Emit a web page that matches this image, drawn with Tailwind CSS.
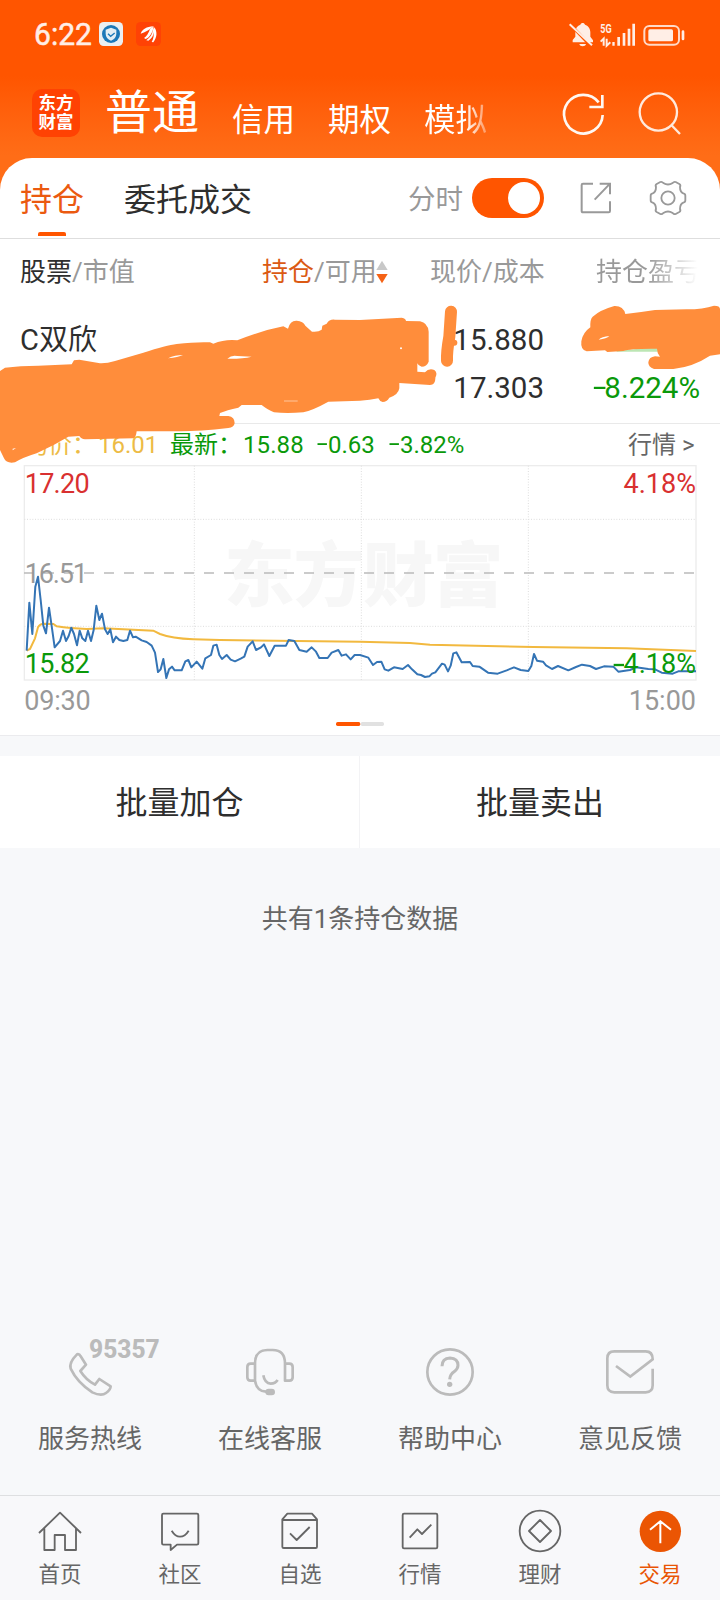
<!DOCTYPE html>
<html lang="zh-CN">
<head>
<meta charset="utf-8">
<title>交易</title>
<script src="https://cdn.jsdelivr.net/npm/@tailwindcss/browser@4"></script>
</head>
<body class="w-[720px] h-[1600px] overflow-hidden bg-[#f7f8fa] text-[#2e2e2e] font-['Roboto','Noto_Sans_CJK_SC',sans-serif]">
<div class="flex flex-col h-[1600px]">

  <!-- Header -->
  <header class="h-[190px] shrink-0 bg-linear-to-b from-[#ff5500] from-[40%] to-[#ff6d17] to-[82%] text-white">
    <div class="h-[68px] flex items-center pl-[34px] pr-[34px]">
      <svg class="w-[65px] overflow-visible" height="34" viewBox="0 0 65 34"><text x="0" y="28" font-size="31" textLength="58" lengthAdjust="spacingAndGlyphs" fill="#ffeee6" stroke="#ffeee6" stroke-width=".5">6:22</text></svg>
      <svg width="24" height="24" viewBox="0 0 72 72"><rect width="72" height="72" rx="14" fill="#ebeff2"/><circle cx="36" cy="36" r="27" fill="#1c78b8"/><path d="M36 17l16 6v13c0 9-6 16-16 20c-10-4-16-11-16-20V23z" fill="#e4eef4"/><path d="M27 35l8 8 12-10" fill="none" stroke="#1c78b8" stroke-width="4"/></svg>
      <svg class="ml-[13px]" width="25" height="24" viewBox="0 0 75 72"><rect width="75" height="72" rx="14" fill="#ff4205"/><g fill="#fff"><path d="M14 35C18 22 32 14 52 13C42 22 30 30 14 35z"/><path d="M24 48C36 40 40 26 42 21L53 13C50 32 42 46 29 51z"/><path d="M31 55C43 46 49 36 50 26L54 15C57 32 50 48 37 56z"/><path d="M47 60C53 50 54 38 53 26L55 16C64 28 64 46 52 61z"/></g></svg>
      <svg class="ml-auto" width="117" height="30" viewBox="-3 0 351 90">
        <g fill="#ffeee6">
          <path d="M8 70V63l8-10V38C16 27 23 20 31 17c2-7 12-7 14 0c9 3 16 11 16 23v13l8 11v6zM28 75h20c-2 9-18 9-20 0z"/>
          <path d="M3 19L66 85" stroke="#ff5500" stroke-width="9"/><path d="M-1 16L66 79" stroke="#ffeee6" stroke-width="6"/>
          <text x="91" y="43" font-size="36" font-weight="700" textLength="34" lengthAdjust="spacingAndGlyphs">5G</text>
          <path d="M101 80V59l-9 9M110 59v21l11-10" fill="none" stroke="#ffeee6" stroke-width="6"/>
          <path d="M127 69h7v11h-7zM142 54h8v26h-8zM158 42h8v38h-8zM173 29h8v51h-8zM187 14h8v66h-8z"/>
          <rect x="223" y="21" width="104" height="56" rx="15" fill="none" stroke="#ffdac8" stroke-width="6"/><rect x="235" y="31" width="74" height="36" rx="5"/><rect x="335" y="34" width="8" height="30" rx="4"/>
        </g>
      </svg>
    </div>
    <div class="h-[90px] flex items-start pl-8">
      <div class="mt-[21px] w-12 h-12 rounded-[10px] bg-[#ff4203] flex flex-col items-center justify-center text-[17.5px] leading-[19px] font-bold"><span>东方</span><span>财富</span></div>
      <span class="ml-[25px] mt-[15px] text-[47px] leading-[60px] w-[127px]">普通</span>
      <span class="mt-[33px] text-[31.5px] leading-[40px] w-[96px]">信用</span>
      <span class="mt-[33px] text-[31.5px] leading-[40px] w-[96px]">期权</span>
      <span class="mt-[33px] text-[31.5px] leading-[40px] w-[64px] bg-linear-to-r from-white from-[65%] to-white/30 bg-clip-text text-transparent">模拟</span>
      <svg class="ml-[72px] mt-[20px]" width="48" height="52" viewBox="600 261 144 156" fill="none" stroke="#fff8f2" stroke-width="8"><path d="M728 342A58 58 0 1 1 716 304"/><path d="M727 282V318H688"/></svg>
      <svg class="ml-[28px] mt-[20px]" width="48" height="52" viewBox="828 261 144 156" fill="none" stroke="#ffe9dc" stroke-width="7"><circle cx="895" cy="333" r="56"/><path d="M934 372l26 27"/></svg>
    </div>
  </header>

  <!-- Positions card -->
  <section class="-mt-8 h-[578px] shrink-0 bg-white rounded-t-[32px] relative border-b border-[#ebebee]">
    <div class="h-[81px] border-b border-[#dedede] flex items-start">
      <div class="ml-5 w-[104px] flex flex-col text-[32px] leading-[40px] pt-[22px] text-[#eb5a10]">持仓<span class="mt-[12px] ml-[18px] w-7 h-[4px] rounded-t-[2px] bg-[#ff5500]"></span></div>
      <span class="text-[32px] leading-[40px] mt-[22px] w-[284px]">委托成交</span>
      <span class="text-[27.5px] leading-[40px] mt-[22px] w-[64px] text-[#999]">分时</span>
      <span class="mt-[20px] w-[72px] h-10 rounded-full bg-[#ff5500] flex items-center justify-end pr-[4px]"><span class="w-8 h-8 rounded-full bg-white"></span></span>
      <svg class="ml-[33px] mt-[21px]" width="40" height="38" viewBox="651 87 120 114" fill="none" stroke="#999" stroke-width="6"><path d="M699 101H669Q665 101 665 105V182Q665 187 669 187H746Q750 187 750 183V154M719 101H750V133M750 101L704 149"/></svg>
      <svg class="ml-[31px] mt-[20px]" width="40" height="40" viewBox="864 84 120 120" fill="none" stroke="#999" stroke-width="5.5" stroke-linejoin="round"><path d="M901 96Q906 94 910 99Q924 108 938 99Q942 94 947 96L958 102Q963 105 960 111Q960 126 970 130Q976 131 976 137V151Q976 157 970 158Q960 162 960 177Q963 183 958 186L947 192Q942 194 938 189Q924 180 910 189Q906 194 901 192L890 186Q885 183 888 177Q888 162 878 158Q872 157 872 151V137Q872 131 878 130Q888 126 888 111Q885 105 890 102Z"/><circle cx="924" cy="144" r="20"/></svg>
    </div>

    <div class="h-[65px] flex items-center text-[26px] leading-[36px] text-[#999] whitespace-nowrap">
      <span class="ml-5 w-[242px]"><span class="text-[#2e2e2e]">股票</span>/市值</span>
      <span class="w-[114px]"><span class="text-[#db5a14]">持仓</span>/可用</span>
      <svg width="12" height="24" viewBox="48 330 36 72"><path d="M66 332l17 28H49z" fill="#c8c8c8"/><path d="M49 372h34l-17 28z" fill="#f56215"/></svg>
      <span class="ml-[42px] w-[166px]">现价/成本</span>
      <span class="bg-linear-to-r from-[#999] from-[50%] to-[#999]/0 to-[98%] bg-clip-text text-transparent">持仓盈亏</span>
    </div>

    <div class="h-[120px] border-b border-[#e9e9e9] pt-[12px] pl-5 pr-[20px] text-[29.5px] leading-[48px]">
      <div class="flex justify-between pr-[156px]"><span class="text-[29px]">C双欣</span><span class="relative z-10">15.880</span></div>
      <div class="flex justify-end"><span>17.303</span><span class="w-[156px] text-right text-[#0a990a] whitespace-nowrap"><span class="inline-block w-[13px] -mr-px scale-x-80 origin-left">–</span>8.224%</span></div>
    </div>

    <div class="h-[42px] flex items-center text-[24px] leading-[36px] text-[#0a990a] whitespace-nowrap">
      <span class="ml-[24px] w-[74px] text-[#edbb45]">均价：</span><span class="w-[72px] text-[#edbb45]">16.01</span>
      <span class="w-[73px]">最新：</span><span class="w-[73px] tracking-[0.1px]">15.88</span><span class="w-[72px]"><span class="inline-block w-[12px] scale-x-80 origin-left">–</span>0.63</span><span class="w-[240px]"><span class="inline-block w-[12px] scale-x-80 origin-left">–</span>3.82%</span>
      <span class="text-[#666]">行情 &gt;</span>
    </div>

    <!-- Intraday chart -->
    <svg class="block -mt-[6px]" width="720" height="275" viewBox="0 0 2160 825" fill="none">
      <rect x="73" y="17" width="2015" height="643" stroke="#ececec" stroke-width="4"/>
      <text x="672" y="422" font-family="'Noto Sans CJK SC'" font-size="212" font-weight="900" fill="#f7f7f7" textLength="838">东方财富</text>
      <path d="M73 178H2088M73 499H2088M583 17V660M1084 17V660M1585 17V660" stroke="#dddddd" stroke-width="3" stroke-dasharray="3 5"/>
      <path d="M72 339H2088" stroke="#bbb" stroke-width="5" stroke-dasharray="30 30"/>
      <g font-size="81">
        <text x="74" y="369" fill="#999" textLength="190">16.51</text>
        <text x="74" y="99" fill="#d93030" textLength="195">17.20</text>
        <text x="2088" y="99" fill="#d93030" text-anchor="end">4.18%</text>
        <text x="74" y="639" fill="#0a990a" textLength="195">15.82</text>
        <text x="73" y="749" fill="#999" textLength="199">09:30</text>
        <text x="2088" y="749" fill="#999" text-anchor="end">15:00</text>
      </g>
      <path d="M80 572L90 567L105 535L114 502Q120 491 132 491L160 492L170 499Q210 505 260 507L310 505L460 512L480 522Q515 535 580 538L660 540L1080 545L1230 549L1290 554L1600 561L1880 565L2088 573" stroke="#f2b93f" stroke-width="6"/>
      <path stroke="#3474b5" stroke-width="6" stroke-linejoin="round" d="M80 572L88 428L97 522L106 380L114 350L122 420L130 497L138 520L147 443L156 505L164 562L180 543L189 512L198 543L206 528L214 503L222 522L231 556L239 512L247 535L256 543L264 512L273 543L281 510L289 437L298 480L306 461L315 508L323 522L331 508L339 547L348 530L358 540L370 543L382 540L390 512L399 532L407 530L425 541L440 546L455 557L465 578L474 636L482 628L490 597L499 654L507 628L516 620L524 631L545 631L556 604L565 600L574 622L590 605L607 626L616 595L633 585L640 557L650 554L658 585L666 597L680 585L692 599L705 604L722 596L733 590L743 560L758 544L768 570L783 562L792 553L808 588L824 557L858 557L866 540L883 543L898 570L920 575L935 562L948 575L958 594L983 594L995 578L1015 570L1025 587L1038 583L1052 598L1064 585L1080 585L1105 593L1119 615L1131 606L1144 605L1154 628L1165 632L1182 622L1208 627L1224 615L1236 628L1252 643L1263 645L1275 651L1288 649L1296 641L1306 637L1326 611L1334 614L1344 634L1352 617L1360 580L1369 577L1385 607L1410 606L1418 618L1438 620L1464 638L1493 641L1520 631L1542 622L1562 630L1585 633L1594 618L1602 582L1611 602L1629 605L1638 616L1656 627L1674 618L1705 631L1728 621L1746 614L1770 618L1788 627L1812 619L1840 620L1855 635L1890 630L1908 622L1945 627L1965 628L1985 638L2018 641L2035 634L2088 634"/>
      <text x="2088" y="639" font-size="81" fill="#0a990a" text-anchor="end">4.18%</text><path d="M1841 615H1872" stroke="#0a990a" stroke-width="7"/>
      <rect x="1008" y="786" width="73" height="12" rx="5" fill="#ff5500"/><rect x="1082" y="786" width="70" height="12" rx="5" fill="#e1e1e1"/>
    </svg>

    <!-- Brush strokes hiding private figures -->
    <svg class="absolute left-0 top-[137px]" width="720" height="175" viewBox="0 0 2160 525" fill="#ff8d3b">
      <path fill="#bce6b4" d="M1850 168L1975 155V170H1850z"/>
      <path fill-rule="evenodd" d="M0 228L15 218Q60 212 115 212L215 208L222 196L238 194L300 205Q320 206 345 198L430 173Q500 151 530 147Q590 140 630 142L640 146Q675 132 712 136Q780 108 850 94L864 101Q870 76 890 77Q910 79 916 92L936 110Q955 112 965 104L967 92L980 86Q988 72 1005 74L1080 75L1205 68Q1218 70 1218 78L1260 79Q1283 83 1286 110V200Q1280 215 1265 215Q1255 213 1252 205V230L1275 232Q1286 219 1303 225Q1314 233 1306 248Q1307 268 1290 270L1198 264V280Q1195 300 1168 308Q1160 321 1148 321Q1138 318 1135 310Q1110 316 1080 317L985 320Q940 345 910 352Q860 356 822 352Q805 346 785 330H725L715 338Q680 345 660 354L658 363H685Q704 366 704 384Q702 398 685 399Q600 409 540 409H410Q408 428 400 430L255 433Q243 432 238 423L205 425Q160 452 110 475Q70 487 45 502Q20 507 12 490L0 465ZM504 190Q525 180 549 180Q535 187 504 190ZM682 191Q695 179 712 183L755 185Q725 192 682 191ZM852 317H893V319H852ZM38 461L48 459L38 466Z"/>
      <circle cx="1203" cy="160" r="3" fill="#fff"/>
      <path d="M1353 50L1348 125Q1340 170 1341 197" stroke="#ff8d3b" stroke-width="36" stroke-linecap="round" stroke-linejoin="round" fill="none"/><circle cx="1363" cy="143" r="9"/>
      <path d="M1771 97Q1770 72 1778 65Q1800 45 1843 33Q1870 32 1876 57Q1920 52 1965 45L2060 43Q2110 43 2142 32Q2160 32 2160 42V178L2130 182Q2080 215 2020 222H1962Q1944 216 1945 202Q1947 186 1965 184L1980 185Q1971 175 1971 161Q1890 160 1870 168L1822 171L1815 166L1760 169Q1741 165 1744 139Q1748 113 1771 97Z"/>
      <path d="M1796 134Q1805 125 1828 123Q1820 131 1796 134Z" fill="#fff"/>
    </svg>
  </section>

  <div class="mt-[20px] h-[92px] shrink-0 bg-white grid grid-cols-2 text-[32px] leading-[95px] text-center">
    <span class="h-[92px] border-r border-[#f3f3f5]">批量加仓</span><span class="h-[92px]">批量卖出</span>
  </div>
  <p class="mt-[51px] text-center text-[26px] leading-[40px] text-[#666]">共有1条持仓数据</p>

  <!-- Support shortcuts -->
  <div class="mt-auto h-[152px] grid grid-cols-4 text-[26px] leading-[36px] text-[#666]">
    <div class="flex flex-col items-center">
      <svg class="overflow-visible" width="48" height="58" viewBox="198 69 144 174" fill="none" stroke="#bbb" stroke-width="8" stroke-linejoin="round"><path d="M231 103Q238 101 242 109L258 134L241 153Q258 180 285 194L298 177L332 199Q332 210 318 219Q304 230 277 217Q232 188 212 146Q206 128 231 103Z"/><text x="267" y="113" font-size="76" font-weight="800" fill="#bbb" stroke="none" textLength="212" lengthAdjust="spacingAndGlyphs">95357</text></svg>
      <span class="mt-[20px]">服务热线</span></div>
    <div class="flex flex-col items-center">
      <svg width="48" height="58" viewBox="738 69 144 174" fill="none" stroke="#bbb" stroke-width="8" stroke-linejoin="round"><path d="M765 131H752Q742 131 742 141V172Q742 182 752 182H765ZM855 131H868Q878 131 878 141V172Q878 182 868 182H855ZM765 131Q765 90 802 90H818Q855 90 855 131M765 182Q770 214 798 215M790 166Q794 190 812 191Q826 191 833 180"/><rect x="796" y="206" width="29" height="20" rx="10" fill="#bbb" stroke="none"/></svg>
      <span class="mt-[20px]">在线客服</span></div>
    <div class="flex flex-col items-center">
      <svg width="48" height="58" viewBox="198 69 144 174" fill="none" stroke="#bbb" stroke-width="8"><circle cx="270" cy="156" r="68"/><path d="M246 139Q246 115 270 114Q294 115 294 136Q294 146 284 154Q270 163 269 178" stroke-width="9"/><circle cx="269" cy="193" r="8" fill="#bbb" stroke="none"/></svg>
      <span class="mt-[20px]">帮助中心</span></div>
    <div class="flex flex-col items-center">
      <svg width="48" height="58" viewBox="738 69 144 174" fill="none" stroke="#bbb" stroke-width="8"><path d="M878 146V196Q878 217 857 217H763Q742 217 742 196V115Q742 94 763 94H857Q878 94 878 118L811 170L768 138"/></svg>
      <span class="mt-[20px]">意见反馈</span></div>
  </div>

  <!-- Tab bar -->
  <nav class="h-[105px] shrink-0 border-t border-[#dedfe1] bg-[#f8f8fa] pt-[11px] grid grid-cols-6 text-[21.5px] leading-[32px] text-[#666]">
    <div class="flex flex-col items-center"><svg width="48" height="48" viewBox="108 561 144 144" fill="none" stroke="#666" stroke-width="5.5" stroke-linejoin="round"><path d="M117 639L180 578L243 639M133 625V690H164V645H195V690H228V625"/></svg><span class="mt-[4px]">首页</span></div>
    <div class="flex flex-col items-center"><svg width="48" height="48" viewBox="468 561 144 144" fill="none" stroke="#666" stroke-width="5.5" stroke-linejoin="round"><path d="M490 581H591Q595 581 595 585V670Q595 674 591 674H531L512 690V674H490Q486 674 486 670V585Q486 581 490 581ZM515 632Q526 650 540 650Q555 650 566 632"/></svg><span class="mt-[4px]">社区</span></div>
    <div class="flex flex-col items-center"><svg width="48" height="48" viewBox="828 561 144 144" fill="none" stroke="#666" stroke-width="5.5" stroke-linejoin="round"><path d="M847 598L862 581H936L951 598V680Q951 684 947 684H851Q847 684 847 680ZM847 600H951M870 640L890 660L929 621"/></svg><span class="mt-[4px]">自选</span></div>
    <div class="flex flex-col items-center"><svg width="48" height="48" viewBox="108 561 144 144" fill="none" stroke="#666" stroke-width="5.5" stroke-linejoin="round"><rect x="128" y="581" width="104" height="104" rx="4"/><path d="M149 653L172 628L186 642L214 614"/></svg><span class="mt-[4px]">行情</span></div>
    <div class="flex flex-col items-center"><svg width="48" height="48" viewBox="468 561 144 144" fill="none" stroke="#666" stroke-width="5.5" stroke-linejoin="round"><circle cx="540" cy="633" r="61"/><path d="M540 600L573 633L540 666L507 633Z"/></svg><span class="mt-[4px]">理财</span></div>
    <div class="flex flex-col items-center text-[#e95504]"><svg width="48" height="48" viewBox="828 561 144 144" fill="none" stroke="#fff" stroke-width="6"><circle cx="901" cy="634" r="62" fill="#eb5503" stroke="none"/><path d="M901 670V604M870 629L901 604L933 629"/></svg><span class="mt-[4px]">交易</span></div>
  </nav>
</div>
</body>
</html>
